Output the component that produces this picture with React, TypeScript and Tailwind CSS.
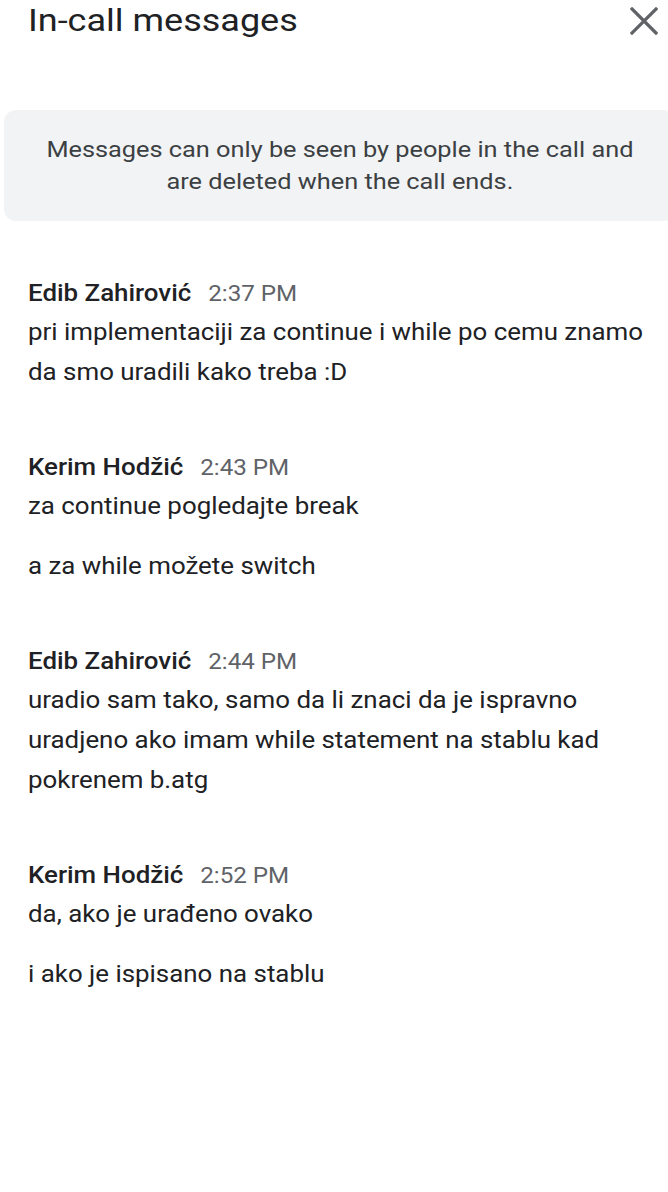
import React from "react";

const messages = [
  {
    name: "Edib Zahirović",
    time: "2:37 PM",
    paras: ["pri implementaciji za continue i while po cemu znamo da smo uradili kako treba :D"],
  },
  {
    name: "Kerim Hodžić",
    time: "2:43 PM",
    paras: ["za continue pogledajte break", "a za while možete switch"],
  },
  {
    name: "Edib Zahirović",
    time: "2:44 PM",
    paras: ["uradio sam tako, samo da li znaci da je ispravno uradjeno ako imam while statement na stablu kad pokrenem b.atg"],
  },
  {
    name: "Kerim Hodžić",
    time: "2:52 PM",
    paras: ["da, ako je urađeno ovako", "i ako je ispisano na stablu"],
  },
];

export default function App() {
  return (
    <div
      className="w-[668px] h-[1192px] overflow-hidden bg-white text-[#202124]"
      style={{ fontFamily: "Roboto, 'Noto Sans', sans-serif" }}
    >
      <div className="flex items-center justify-between h-[40px] pl-[28px] pr-[10px]">
        <h1 className="inline-block origin-left scale-x-[1.125] text-[32px] leading-[40px] font-normal text-[#202124]">
          In-call messages
        </h1>
        <svg width="28" height="28" viewBox="0 0 28 28" className="mt-[2px]">
          <path d="M2 2 L26 26 M26 2 L2 26" stroke="#5f6368" strokeWidth="3.2" strokeLinecap="square" />
        </svg>
      </div>

      <div className="mt-[70px] ml-[4px] w-[671px] h-[111px] pb-[2px] rounded-[12px] bg-[#f1f3f4] flex items-center justify-center">
        <p className="origin-center scale-x-[1.125] text-center text-[22.5px] leading-[32px] text-[#3c4043] whitespace-nowrap">
          Messages can only be seen by people in the call and
          <br />
          are deleted when the call ends.
        </p>
      </div>

      <div className="mt-[54px] pl-[28px] flex flex-col gap-[56px]">
        {messages.map((m, i) => (
          <div key={i} className="flex flex-col">
            <div className="flex items-baseline gap-[15px] leading-[38px] origin-left scale-x-[1.125]">
              <span className="text-[23px] font-medium text-[#202124]">{m.name}</span>
              <span className="text-[21.5px] text-[#5f6368]">{m.time}</span>
            </div>
            <div className="flex flex-col gap-[20px]">
              {m.paras.map((p, j) => (
                <p
                  key={j}
                  className="w-[551px] origin-left scale-x-[1.125] text-[23px] leading-[40px] text-[#202124]"
                >
                  {p}
                </p>
              ))}
            </div>
          </div>
        ))}
      </div>
    </div>
  );
}
